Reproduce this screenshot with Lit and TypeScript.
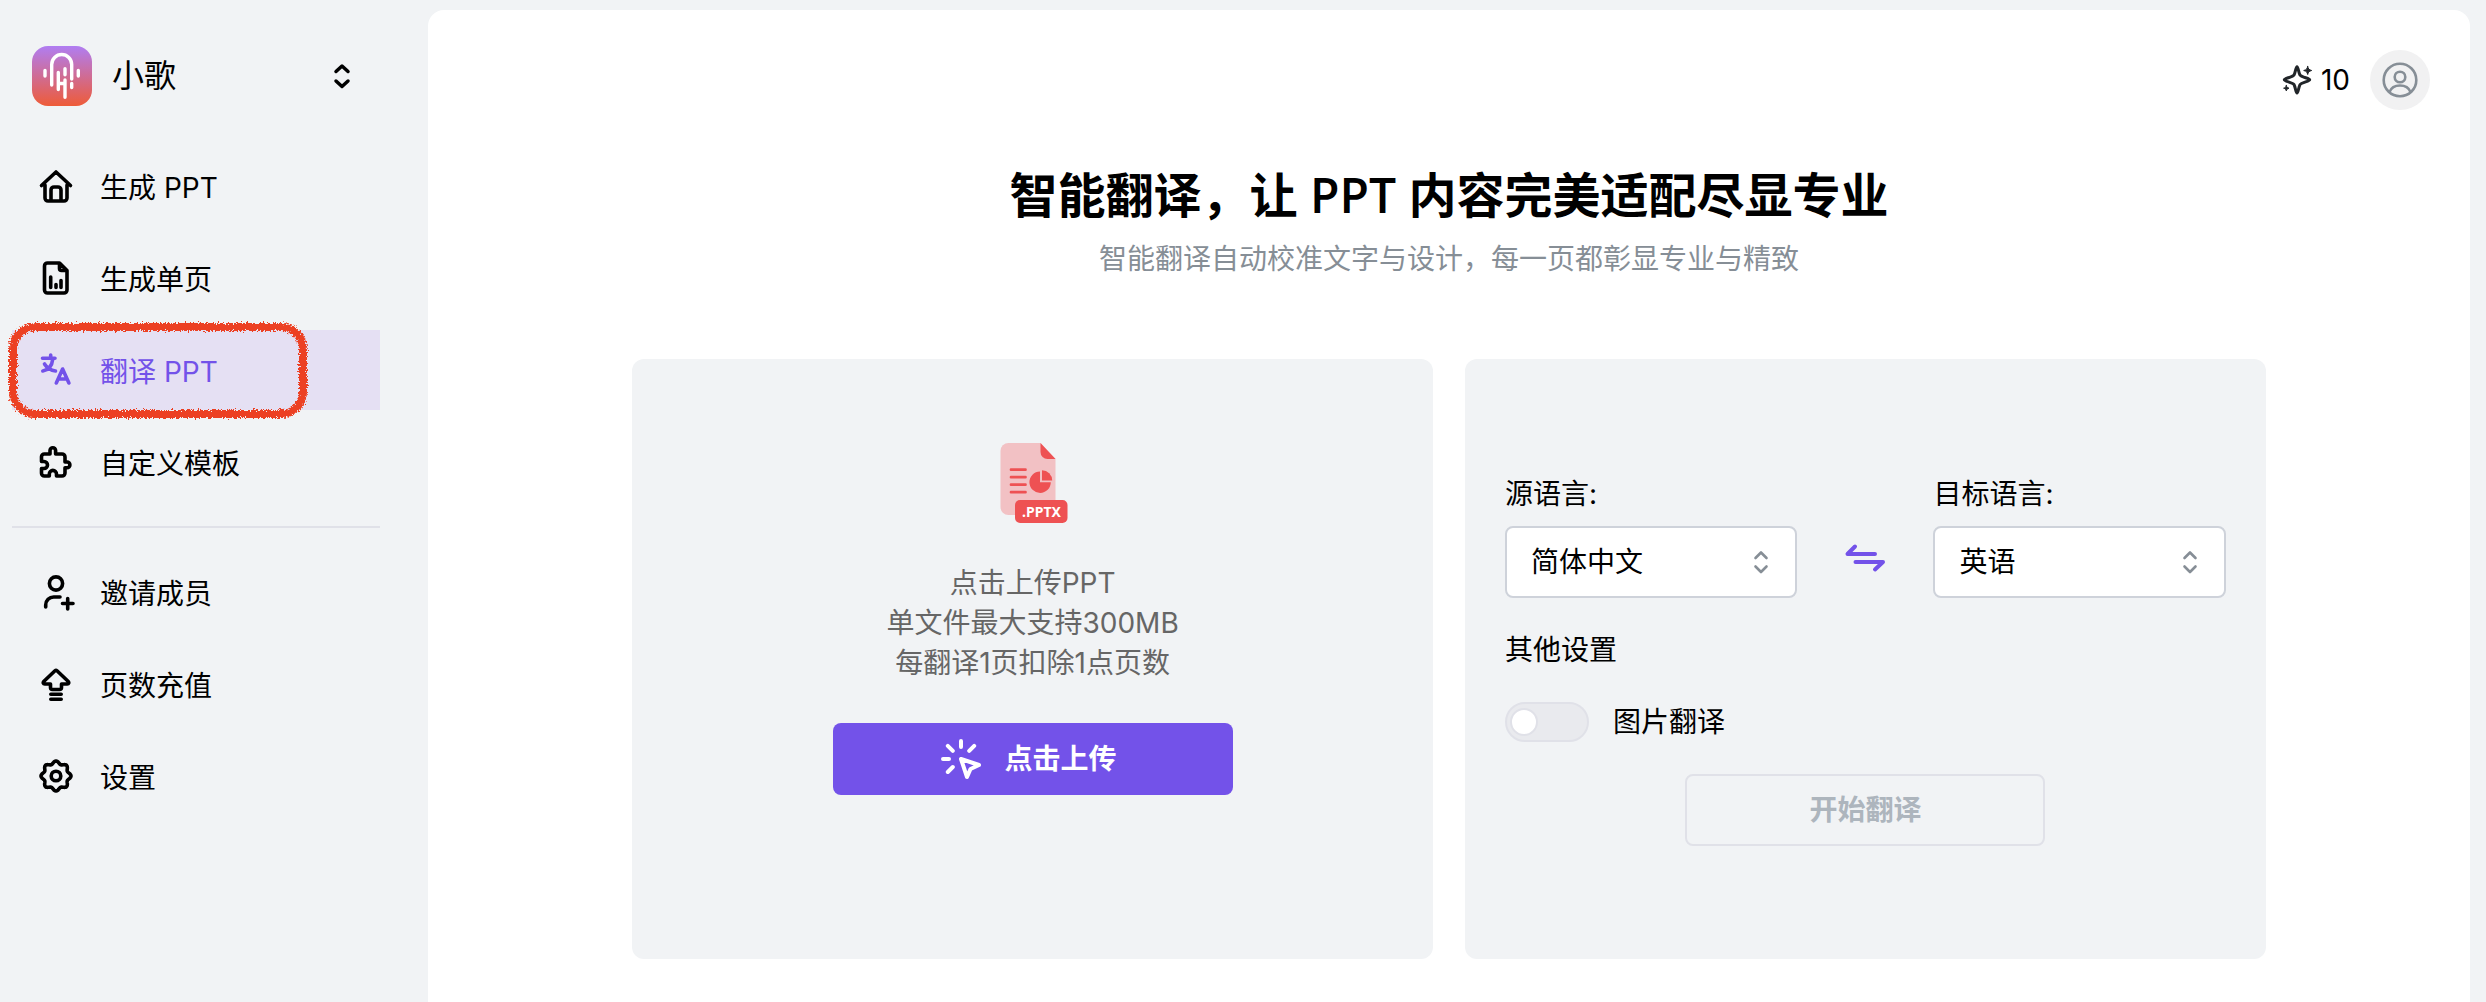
import { LitElement, html, css, svg, nothing, type TemplateResult } from "lit";
import { customElement, state } from "lit/decorators.js";

type IconName = "home" | "page" | "translate" | "puzzle" | "invite" | "recharge" | "gear";

interface NavItem {
  id: string;
  label: string;
  icon: IconName;
}

/** Closed outline of an eight-lobed cog centred in a 36-unit box. */
const cogOutline = (() => {
  const points: string[] = [];
  for (let i = 0; i < 96; i++) {
    const a = (i / 96) * Math.PI * 2;
    const r = 13.6 + 1.4 * Math.cos(8 * a);
    points.push(`${(18 + r * Math.sin(a)).toFixed(2)} ${(18 - r * Math.cos(a)).toFixed(2)}`);
  }
  return `M${points.join("L")}Z`;
})();

const glyphs: Record<IconName, TemplateResult> = {
  home: svg`<path d="M3.5 17.5 18 4l14.500 13.500M7 17v13a3 3 0 0 0 3 3h16a3 3 0 0 0 3-3V17M13 33V22a3 3 0 0 1 3-3h4a3 3 0 0 1 3 3v11"/>`,
  page: svg`<path d="M21.500 3H9.500a3 3 0 0 0-3 3v24a3 3 0 0 0 3 3H26a3 3 0 0 0 3-3V10.500zM21.500 3v5.500a2 2 0 0 0 2 2H29M12.700 17v10.500M18 24.500v3M23 20.500v7"/>`,
  translate: svg`<path d="M4.500 6.300H17M12.700 3v3.300M14.800 7C14 14 10.500 18 4.800 19M6.500 12c2.500 4 6 6.500 11 7M18.300 31l6.300-14 6.300 14M20.500 27h8.500"/>`,
  puzzle: svg`<path d="M12 10V6.500a2.800 2.800 0 0 1 5.600 0V10H24a3 3 0 0 1 3 3v5h2a2.900 2.900 0 0 1 0 5.800h-2V29a3 3 0 0 1-3 3h-5.500v-2a3.600 3.600 0 0 0-7.200 0v2h-5a2.800 2.800 0 0 1-2.800-2.800v-4.700h2.500a3.500 3.500 0 0 0 0-7H3.500v-4.700A2.800 2.800 0 0 1 6.300 10z"/>`,
  invite: svg`<circle cx="18" cy="9.500" r="6.600"/><path d="M7.700 33v-2a8 8 0 0 1 8-8H22M24.500 29.500h10.500M29.700 24.500v10.500"/>`,
  recharge: svg`<path d="M17 4.800a1.500 1.500 0 0 1 2 0l11.300 10.700c1 1 .500 2.500-1 2.500H23.500v3.500a2 2 0 0 1-2 2h-7a2 2 0 0 1-2-2V18H6.700c-1.500 0-2-1.500-1-2.500zM12.800 28.300h10.400M12.800 33.200h10.400"/>`,
  gear: svg`<path d=${cogOutline}/><circle cx="18" cy="18" r="4.800"/>`,
};

const mainNav: NavItem[] = [
  { id: "generate", label: "生成 PPT", icon: "home" },
  { id: "single", label: "生成单页", icon: "page" },
  { id: "translate", label: "翻译 PPT", icon: "translate" },
  { id: "template", label: "自定义模板", icon: "puzzle" },
];

const accountNav: NavItem[] = [
  { id: "invite", label: "邀请成员", icon: "invite" },
  { id: "recharge", label: "页数充值", icon: "recharge" },
  { id: "settings", label: "设置", icon: "gear" },
];

const baseStyles = css`
  * {
    box-sizing: border-box;
  }
  a {
    color: inherit;
    text-decoration: none;
  }
  button,
  select,
  input {
    font: inherit;
    color: inherit;
    margin: 0;
  }
  button {
    cursor: pointer;
  }
  svg {
    display: block;
    flex: none;
    overflow: visible;
  }
  .line {
    fill: none;
    stroke: currentColor;
    stroke-linecap: round;
    stroke-linejoin: round;
  }
`;

@customElement("side-bar")
export class SideBar extends LitElement {
  static styles = [
    baseStyles,
    css`
      :host {
        display: block;
        width: 428px;
        flex: none;
        padding: 46px 48px 24px 12px;
      }
      .workspace {
        display: flex;
        align-items: center;
        gap: 20px;
        width: 100%;
        height: 60px;
        padding: 0 26px 0 20px;
        border: 0;
        background: none;
        font-size: 32px;
        line-height: 40px;
        text-align: left;
      }
      .name {
        flex: 1;
      }
      .menu {
        display: flex;
        flex-direction: column;
        gap: 12px;
        margin: 0;
        padding: 0;
        list-style: none;
      }
      .primary {
        margin-top: 40px;
      }
      .item {
        position: relative;
      }
      .link {
        display: flex;
        align-items: center;
        gap: 26px;
        height: 80px;
        padding: 0 26px;
        font-size: 28px;
        line-height: 40px;
      }
      .label {
        padding-top: 4px;
      }
      .active {
        background: #e5e0f3;
        color: #7352e9;
      }
      .rule {
        height: 2px;
        margin: 24px 0;
        border: 0;
        background: #e0e1e8;
      }
      .marker {
        position: absolute;
        left: -12px;
        top: -12px;
        pointer-events: none;
      }
    `,
  ];

  @state() private current = "translate";

  private renderMarker() {
    return html`<svg class="marker" width="320" height="104" viewBox="0 0 320 104" aria-hidden="true">
      <defs>
        <filter id="crayon" x="-5%" y="-10%" width="110%" height="120%" color-interpolation-filters="sRGB">
          <feTurbulence type="fractalNoise" baseFrequency="0.6" numOctaves="2" seed="7" result="grain" />
          <feDisplacementMap in="SourceGraphic" in2="grain" scale="7" xChannelSelector="R" yChannelSelector="G" />
        </filter>
      </defs>
      <rect x="13" y="9" width="290" height="87" rx="22" fill="none" stroke="#ec4023" stroke-width="8" filter="url(#crayon)" />
    </svg>`;
  }

  private renderItem(item: NavItem) {
    const active = item.id === this.current;
    return html`<li class="item">
      <a
        class=${active ? "link active" : "link"}
        href="#${item.id}"
        aria-current=${active ? "page" : nothing}
        @click=${() => (this.current = item.id)}
      >
        <svg class="line" width="36" height="36" viewBox="0 0 36 36" stroke-width="3.600" aria-hidden="true">
          ${glyphs[item.icon]}
        </svg>
        <span class="label">${item.label}</span>
      </a>
      ${item.id === "translate" ? this.renderMarker() : nothing}
    </li>`;
  }

  render() {
    return html`
      <button class="workspace" type="button">
        <svg width="60" height="60" viewBox="0 0 60 60" aria-hidden="true">
          <defs>
            <linearGradient id="brand" x1="0" y1="0" x2="0" y2="1">
              <stop offset="0" stop-color="#b07df2" />
              <stop offset="1" stop-color="#ee5b38" />
            </linearGradient>
          </defs>
          <rect width="60" height="60" rx="16" fill="url(#brand)" />
          <path
            d="M19.700 39V18.500a10 10 0 0 1 20 0V33M39.700 37.500v4M13 24.500v5.500M46.300 24.500v5.500M26.300 26.500v17M33 22.800v6M33 34v17.200M26.300 37.500H33"
            fill="none"
            stroke="#fff"
            stroke-width="3.400"
            stroke-linecap="round"
          />
        </svg>
        <span class="name">小歌</span>
        <svg class="line" width="24" height="36" viewBox="0 0 24 36" stroke-width="3.500" aria-hidden="true">
          <path d="M6 13.500 12 8l6 5.500M6 23l6 5.500 6-5.500" />
        </svg>
      </button>
      <nav>
        <ul class="menu primary">
          ${mainNav.map((item) => this.renderItem(item))}
        </ul>
        <hr class="rule" />
        <ul class="menu">
          ${accountNav.map((item) => this.renderItem(item))}
        </ul>
      </nav>
    `;
  }
}

@customElement("upload-card")
export class UploadCard extends LitElement {
  static styles = [
    baseStyles,
    css`
      :host {
        display: flex;
        flex-direction: column;
        align-items: center;
        gap: 40px;
        padding: 84px 40px 40px;
        border-radius: 12px;
        background: #f1f3f5;
      }
      .hint {
        margin: 0;
        color: #666;
        font-size: 28px;
        line-height: 40px;
        text-align: center;
      }
      .row {
        display: block;
      }
      .badge {
        font: 700 14px "Noto Sans", "Open Sans", sans-serif;
        fill: #fff;
        text-anchor: middle;
      }
      .upload {
        display: flex;
        align-items: center;
        justify-content: center;
        gap: 24px;
        width: 400px;
        max-width: 100%;
        height: 72px;
        padding: 0 8px 0 0;
        border: 0;
        border-radius: 8px;
        background: #7352e9;
        color: #fff;
        font-size: 28px;
        font-weight: 600;
        line-height: 40px;
      }
    `,
  ];

  render() {
    return html`
      <svg width="80" height="80" viewBox="-7.500 0 80 80" role="img" aria-label="PPTX">
        <path d="M8 0h32l15 16v56H8a8 8 0 0 1-8-8V8a8 8 0 0 1 8-8z" fill="#f2c1c4" />
        <path d="M40 0l15 16h-8a7 7 0 0 1-7-7z" fill="#ee5153" />
        <path d="M10.500 26.700h14.500M10.500 34.200h14.500M10.500 41.700h14.500M10.500 49.200h14.500" stroke="#ee5153" stroke-width="2.700" stroke-linecap="round" />
        <path d="M39.500 28.500v10.700h10.800a10.700 10.700 0 1 1-10.800-10.700z" fill="#ee5153" />
        <path d="M41.500 27.200a10.300 10.300 0 0 1 10.200 10.300H41.500z" fill="#ee5153" />
        <rect x="14.500" y="57" width="52.500" height="23" rx="5" fill="#ee5153" />
        <text class="badge" x="41" y="74">.PPTX</text>
      </svg>
      <p class="hint">
        <span class="row">点击上传PPT</span>
        <span class="row">单文件最大支持300MB</span>
        <span class="row">每翻译1页扣除1点页数</span>
      </p>
      <button class="upload" type="button">
        <svg class="line" width="40" height="40" viewBox="0 0 40 40" stroke-width="4" aria-hidden="true">
          <path d="M20 2v6M6.800 6.800l5 5M33.200 6.800l-5 5M2 20h6M6.800 33l5-5M20 20l18 6-8.500 4L26 38z" />
        </svg>
        <span>点击上传</span>
      </button>
    `;
  }
}

@customElement("language-card")
export class LanguageCard extends LitElement {
  static styles = [
    baseStyles,
    css`
      :host {
        display: flex;
        flex-direction: column;
        justify-content: center;
        gap: 32px;
        padding: 40px;
        border-radius: 12px;
        background: #f1f3f5;
        font-size: 28px;
        line-height: 40px;
      }
      .languages {
        display: grid;
        grid-template-columns: 1fr 136px 1fr;
        align-items: end;
      }
      .field {
        display: flex;
        flex-direction: column;
        gap: 12px;
      }
      .caption {
        padding-top: 2px;
      }
      .picker {
        display: grid;
        align-items: center;
        color: #868e96;
      }
      .picker > * {
        grid-area: 1 / 1;
      }
      .picker svg {
        justify-self: end;
        margin-right: 24px;
        pointer-events: none;
      }
      .select {
        width: 100%;
        height: 72px;
        padding: 0 60px 0 24px;
        border: 2px solid #ced2da;
        border-radius: 8px;
        background: #fff;
        color: #000;
        appearance: none;
      }
      .swap {
        display: flex;
        align-items: center;
        justify-content: center;
        height: 72px;
        padding: 0 0 8px;
        border: 0;
        background: none;
        color: #7352e9;
      }
      .heading {
        margin: 0;
        font: inherit;
      }
      .option {
        display: flex;
        align-items: center;
        gap: 24px;
      }
      .switch {
        display: flex;
        align-items: center;
        width: 84px;
        height: 40px;
        padding: 0 3px;
        border: 2px solid #e0e1e8;
        border-radius: 20px;
        background: #e9eaee;
        appearance: none;
        cursor: pointer;
      }
      .switch::before {
        content: "";
        box-sizing: border-box;
        width: 28px;
        height: 28px;
        border: 2px solid #e0e1e8;
        border-radius: 50%;
        background: #fff;
      }
      .switch:checked {
        justify-content: flex-end;
        background: #7352e9;
      }
      .start {
        align-self: center;
        width: 360px;
        max-width: 100%;
        height: 72px;
        border: 2px solid #e0e1e8;
        border-radius: 8px;
        background: none;
        color: #adb5bd;
        font-weight: 600;
      }
    `,
  ];

  @state() private source = "简体中文";
  @state() private target = "英语";

  private swap() {
    [this.source, this.target] = [this.target, this.source];
  }

  private renderField(id: string, label: string, value: string, pick: (v: string) => void) {
    return html`<div class="field">
      <label class="caption" for=${id}>${label}</label>
      <div class="picker">
        <select
          class="select"
          id=${id}
          .value=${value}
          @change=${(e: Event) => pick((e.target as HTMLSelectElement).value)}
        >
          ${["简体中文", "英语"].map((name) => html`<option ?selected=${name === value}>${name}</option>`)}
        </select>
        <svg class="line" width="24" height="36" viewBox="0 0 24 36" stroke-width="2.600" aria-hidden="true">
          <path d="M6.500 14 12 8.500l5.500 5.500M6.500 22.500 12 28l5.500-5.500" />
        </svg>
      </div>
    </div>`;
  }

  render() {
    return html`
      <div class="languages">
        ${this.renderField("source", "源语言:", this.source, (v) => (this.source = v))}
        <button class="swap" type="button" aria-label="交换语言" @click=${this.swap}>
          <svg class="line" width="40" height="30" viewBox="0 0 40 30" stroke-width="4" aria-hidden="true">
            <path d="M30 11H2.500L10 3.500M10.500 19H38l-8 7.500" />
          </svg>
        </button>
        ${this.renderField("target", "目标语言:", this.target, (v) => (this.target = v))}
      </div>
      <h2 class="heading">其他设置</h2>
      <div class="option">
        <input class="switch" id="images" type="checkbox" role="switch" />
        <label for="images">图片翻译</label>
      </div>
      <button class="start" type="button" disabled>开始翻译</button>
    `;
  }
}

@customElement("app-root")
export class AppRoot extends LitElement {
  static styles = [
    baseStyles,
    css`
      :host {
        display: flex;
        min-height: 100vh;
        background: #f1f3f5;
        color: #000;
        font-family: Inter, "Noto Sans CJK SC", sans-serif;
      }
      .page {
        flex: 1;
        min-width: 0;
        margin: 10px 16px 0 0;
        border-radius: 16px 16px 0 0;
        background: #fff;
      }
      .topbar {
        display: flex;
        align-items: center;
        justify-content: flex-end;
        gap: 20px;
        padding: 40px 40px 0;
      }
      .credits {
        display: flex;
        align-items: center;
        gap: 6px;
        font-size: 28px;
      }
      .spark {
        color: #212529;
      }
      .avatar {
        display: flex;
        align-items: center;
        justify-content: center;
        width: 60px;
        height: 60px;
        padding: 0;
        border: 0;
        border-radius: 50%;
        background: #f1f1f2;
        color: #868e96;
      }
      .hero {
        display: flex;
        flex-direction: column;
        gap: 12px;
        margin: 53px 0 80px;
        text-align: center;
      }
      .title {
        margin: 0;
        font-family: "Open Sans", "Noto Sans CJK SC", sans-serif;
        font-size: 48px;
        font-weight: 600;
        line-height: 64px;
      }
      .subtitle {
        margin: 0;
        color: #868e96;
        font-size: 28px;
        line-height: 40px;
      }
      .cards {
        display: grid;
        grid-template-columns: 1fr 1fr;
        gap: 32px;
        width: 80%;
        min-height: 600px;
        margin: 0 auto 40px;
      }
    `,
  ];

  render() {
    return html`
      <side-bar></side-bar>
      <main class="page">
        <header class="topbar">
          <div class="credits">
            <svg class="line spark" width="36" height="36" viewBox="0 0 36 36" stroke-width="3" aria-hidden="true">
              <path d="M18 4.800c1.200 0 1.500 5.500 3 8.200 1.200 2.200 9.700 3.300 9.700 4.800s-8.500 2.600-9.700 4.800c-1.500 2.700-1.800 8.400-3 8.400s-1.500-5.700-3-8.400c-1.200-2.200-9.700-3.300-9.700-4.800S13.800 15.200 15 13c1.500-2.700 1.800-8.200 3-8.200z" />
              <path d="M28.700 4.500c.600 2.500 1.200 3.200 4 4-2.800.800-3.400 1.500-4 4-.600-2.500-1.200-3.200-4-4 2.800-.800 3.400-1.500 4-4zM7.300 23.500c.500 1.700.900 2.200 2.700 2.700-1.800.500-2.200 1-2.700 2.700-.500-1.700-.900-2.200-2.700-2.700 1.800-.500 2.200-1 2.700-2.700z" fill="currentColor" stroke-width="1" />
            </svg>
            <span>10</span>
          </div>
          <button class="avatar" type="button" aria-label="账户">
            <svg class="line" width="36" height="36" viewBox="0 0 36 36" stroke-width="2.600" aria-hidden="true">
              <circle cx="18" cy="18" r="16.300" />
              <circle cx="18" cy="15" r="5.300" />
              <path d="M7.500 30c1.500-4 5.500-6.500 10.500-6.500s9 2.500 10.500 6.500" />
            </svg>
          </button>
        </header>
        <section class="hero">
          <h1 class="title">智能翻译，让 PPT 内容完美适配尽显专业</h1>
          <p class="subtitle">智能翻译自动校准文字与设计，每一页都彰显专业与精致</p>
        </section>
        <section class="cards">
          <upload-card></upload-card>
          <language-card></language-card>
        </section>
      </main>
    `;
  }
}
